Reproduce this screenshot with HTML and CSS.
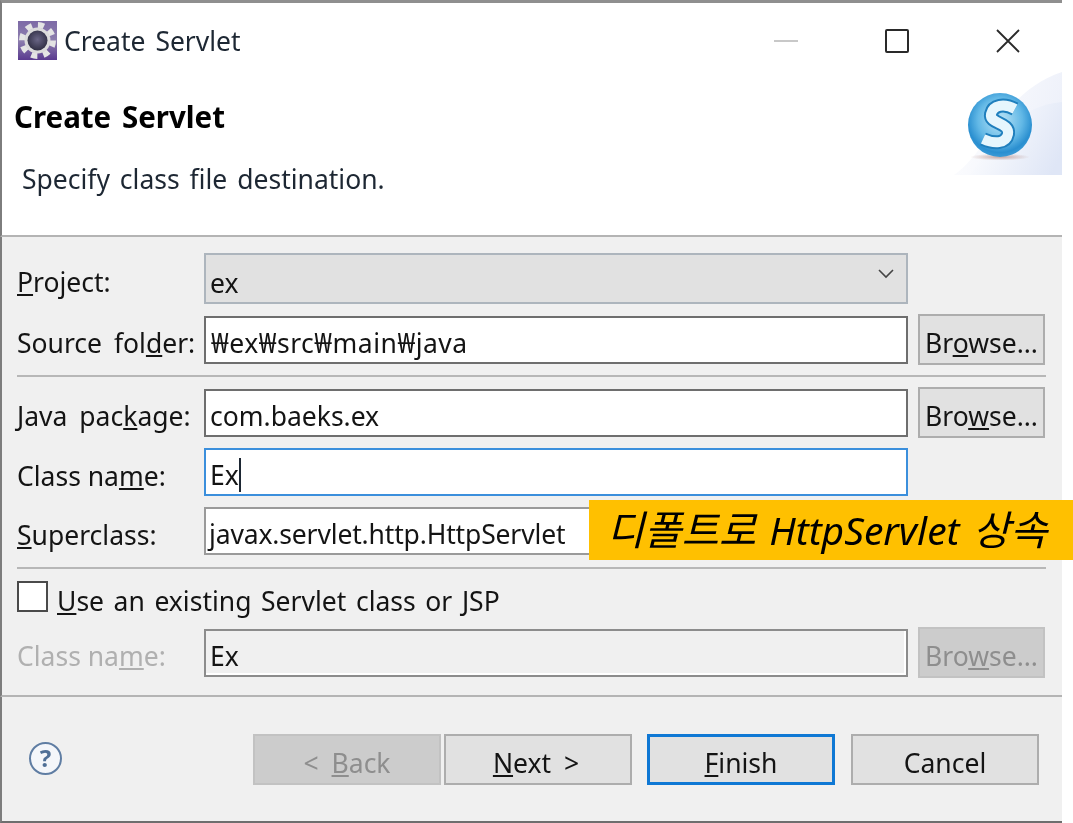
FILE: index.html
```html
<!DOCTYPE html>
<html lang="en">
<head>
<meta charset="utf-8">
<title>Create Servlet</title>
<link rel="stylesheet" href="styles.css">
</head>
<body>
<div class="dialog">
  <header class="titlebar">
    <svg class="app-icon" viewBox="0 0 39 39" width="39" height="39" aria-hidden="true">
      <defs>
        <linearGradient id="appBg" x1="0" y1="0" x2="0" y2="1">
          <stop offset="0" stop-color="#7d6aa6"/>
          <stop offset="0.5" stop-color="#8d7fae"/>
          <stop offset="1" stop-color="#5a3a8f"/>
        </linearGradient>
        <radialGradient id="appCore" cx="0.5" cy="0.45" r="0.6">
          <stop offset="0" stop-color="#6a6686"/>
          <stop offset="1" stop-color="#2b2a3e"/>
        </radialGradient>
      </defs>
      <rect width="39" height="39" fill="url(#appBg)"/>
      <circle cx="19.5" cy="19.5" r="15.5" fill="none" stroke="#e4e4e4" stroke-width="6" stroke-dasharray="6.1 6.07"/>
      <circle cx="19.5" cy="19.5" r="13" fill="#dcdcdc"/>
      <circle cx="19.5" cy="19.5" r="10" fill="url(#appCore)"/>
    </svg>
    <span class="window-title">Create Servlet</span>
    <div class="window-controls">
      <svg class="ctl ctl-min" viewBox="0 0 24 24" width="24" height="24" aria-hidden="true"><path d="M0 12H24" stroke="#c8c8c8" stroke-width="2"/></svg>
      <svg class="ctl ctl-max" viewBox="0 0 24 24" width="24" height="24" aria-hidden="true"><rect x="1" y="1" width="22" height="22" rx="1" fill="none" stroke="#2a2a2a" stroke-width="2"/></svg>
      <svg class="ctl ctl-close" viewBox="0 0 24 24" width="24" height="24" aria-hidden="true"><path d="M1 1L23 23M23 1L1 23" stroke="#2a2a2a" stroke-width="1.8"/></svg>
    </div>
  </header>

  <section class="wizard-head">
    <div class="wizard-text">
      <h1 class="wizard-title">Create Servlet</h1>
      <p class="wizard-desc">Specify class file destination.</p>
    </div>
    <svg class="wizard-logo" viewBox="0 0 112 103" width="112" height="103" aria-hidden="true">
      <defs>
        <linearGradient id="wash" x1="0" y1="0.3" x2="1" y2="0.7">
          <stop offset="0" stop-color="#ffffff"/>
          <stop offset="1" stop-color="#dfe6f6"/>
        </linearGradient>
        <linearGradient id="wash2" x1="0" y1="0" x2="1" y2="0.3">
          <stop offset="0" stop-color="#ffffff"/>
          <stop offset="1" stop-color="#eef1fa"/>
        </linearGradient>
        <radialGradient id="ball" cx="0.5" cy="0.42" r="0.58">
          <stop offset="0" stop-color="#bfe6f7"/>
          <stop offset="0.6" stop-color="#62b8e6"/>
          <stop offset="0.88" stop-color="#2a8fd0"/>
          <stop offset="1" stop-color="#3a9ad6"/>
        </radialGradient>
        <radialGradient id="shade" cx="0.5" cy="0.5" r="0.5">
          <stop offset="0" stop-color="#a8756a" stop-opacity="0.6"/>
          <stop offset="1" stop-color="#a8756a" stop-opacity="0"/>
        </radialGradient>
      </defs>
      <path d="M4 103C40 78 52 20 112 0V103Z" fill="url(#wash2)"/>
      <path d="M20 103C50 60 70 34 112 30V103Z" fill="url(#wash)"/>
      <ellipse cx="50" cy="85" rx="30" ry="3.5" fill="url(#shade)"/>
      <circle cx="50" cy="53" r="32" fill="url(#ball)"/>
      <path d="M65 37C54 31 43 33 41 42C39 52 60 50 58 62C56 72 44 72 33 67" fill="none" stroke="#1f7fbd" stroke-width="14"/>
      <path d="M65 37C54 31 43 33 41 42C39 52 60 50 58 62C56 72 44 72 33 67" fill="none" stroke="#e6f6fd" stroke-width="10"/>
    </svg>
  </section>

  <main class="wizard-body">
    <div class="row row-project">
      <label class="label"><u>P</u>roject:</label>
      <div class="select"><span>ex</span>
        <svg class="chevron" viewBox="0 0 16 10" width="16" height="10" aria-hidden="true"><path d="M1 1L8 8L15 1" fill="none" stroke="#444" stroke-width="1.6"/></svg>
      </div>
    </div>
    <div class="row">
      <label class="label">Source fol<u>d</u>er:</label>
      <div class="field field-path">₩ex₩src₩main₩java</div>
      <button class="btn btn-side">Br<u>o</u>wse...</button>
    </div>
    <hr class="sep">
    <div class="row">
      <label class="label">Java pac<u>k</u>age:</label>
      <div class="field">com.baeks.ex</div>
      <button class="btn btn-side">Bro<u>w</u>se...</button>
    </div>
    <div class="row row-tight">
      <label class="label label-tight">Class na<u>m</u>e:</label>
      <div class="field field-focus"><span class="caret-text">Ex</span></div>
    </div>
    <div class="row row-tight row-super">
      <label class="label"><u>S</u>uperclass:</label>
      <div class="field field-super">javax.servlet.http.HttpServlet</div>
    </div>
    <hr class="sep sep-2">
    <div class="check-row">
      <span class="checkbox"></span>
      <span class="check-label"><u>U</u>se an existing Servlet class or JSP</span>
    </div>
    <div class="row row-disabled">
      <label class="label label-tight label-disabled">Class na<u>m</u>e:</label>
      <div class="field field-disabled">Ex</div>
      <button class="btn btn-side btn-disabled">Bro<u>w</u>se...</button>
    </div>
  </main>

  <footer class="wizard-foot">
    <div class="help">?</div>
    <div class="foot-buttons">
      <button class="btn btn-foot btn-disabled">&lt; <u>B</u>ack</button>
      <button class="btn btn-foot btn-next"><u>N</u>ext &gt;</button>
      <button class="btn btn-foot btn-default"><u>F</u>inish</button>
      <button class="btn btn-foot">Cancel</button>
    </div>
  </footer>

  <div class="callout"><span class="ko">디폴트로</span> HttpServlet <span class="ko">상속</span></div>
</div>
</body>
</html>
```
FILE: styles.css
```css
* { box-sizing: border-box; }
html, body { margin: 0; padding: 0; background: #fff; }
body { width: 1073px; height: 823px; overflow: hidden; font-family: "Noto Sans", "Noto Sans CJK KR", sans-serif; color: #141414; }

.dialog {
  position: relative;
  width: 1073px;
  height: 823px;
  background: #fff;
  font-size: 26.5px;
  line-height: 36px;
  word-spacing: 3px;
  filter: blur(0.35px);
}

.titlebar {
  display: flex;
  align-items: center;
  width: 1062px;
  height: 72px;
  padding: 6px 42px 0 18px;
  background: #fff;
  border-top: 3px solid #8f8f8f;
  border-left: 2px solid #7d7d7d;
}
.app-icon { margin-left: -2px; flex: none; }
.window-title { margin-left: 7px; color: #1d2733; }
.window-controls { display: flex; align-items: center; gap: 87px; margin-left: auto; }
.ctl { display: block; flex: none; }

.wizard-head {
  display: flex;
  justify-content: space-between;
  width: 1062px;
  height: 165px;
  padding-left: 12px;
  background: #fff;
  border-left: 2px solid #7d7d7d;
  border-bottom: 2px solid #b4b4b4;
}
.wizard-title { margin: 26px 0 0; font-size: 29.5px; line-height: 38px; font-weight: 700; color: #000; }
.wizard-desc { margin: 25px 0 0 8px; line-height: 36px; color: #1d2733; }
.wizard-logo { flex: none; display: block; }

.wizard-body {
  width: 1062px;
  height: 460px;
  padding: 16px 0 0 15px;
  background: #f0f0f0;
  border-left: 2px solid #7d7d7d;
  border-bottom: 2px solid #b4b4b4;
}
.row {
  display: grid;
  grid-template-columns: 187px 704px 137px;
  align-items: center;
  height: 51px;
  margin-top: 10px;
}
.row-project { margin-top: 0; }
.row-tight { height: 48px; }
.row-super { margin-top: 11px; }
.row-disabled { margin-top: 15px; }
.label { white-space: nowrap; padding-top: 7px; word-spacing: 5px; }
.label-tight { word-spacing: 0; }
.label-disabled { color: #b0b0b0; }
.select {
  display: flex;
  align-items: center;
  justify-content: space-between;
  height: 51px;
  padding: 9px 12px 0 4px;
  background: #e1e1e1;
  border: 2px solid #adb5bd;
}
.chevron { display: block; margin-top: -18px; }
.field {
  height: 48px;
  padding: 7px 0 0 4px;
  background: #fff;
  border: 2px solid #6e6e6e;
  white-space: nowrap;
  overflow: hidden;
}
.field-path { padding-left: 5px; letter-spacing: 0.5px; }
.field-focus { border-color: #3b8fdc; }
.field-super { border-color: #9a9a9a; padding-left: 3px; letter-spacing: -0.15px; }
.field-disabled { background: #f0f0f0; border-color: #8c8c8c; box-shadow: inset -2px -2px 0 #fff; }
.caret-text { border-right: 2px solid #1d2733; display: inline-block; line-height: 34px; }
.sep { height: 2px; margin: 10px 0 0; border: 0; background: #b7b7b7; width: 1029px; }
.sep-2 { margin-top: 12px; }

.check-row { display: flex; align-items: center; height: 31px; margin-top: 12px; }
.checkbox { flex: none; width: 31px; height: 31px; background: #fff; border: 2px solid #4a4a4a; }
.check-label { margin-left: 9px; padding-top: 8px; word-spacing: 2.7px; }

.btn {
  height: 51px;
  margin: 0;
  padding: 7px 0 0;
  font: inherit;
  word-spacing: inherit;
  color: #141414;
  background: #e1e1e1;
  border: 2px solid #adadad;
}
.btn-side { width: 127px; margin-left: 10px; }
.btn-disabled { background: #cccccc; border-color: #c2c2c2; color: #8e8e8e; }

.wizard-foot {
  display: flex;
  align-items: flex-start;
  width: 1062px;
  height: 126px;
  padding: 0 0 0 27px;
  background: #f0f0f0;
  border-left: 2px solid #7d7d7d;
  border-bottom: 2px solid #6e6e6e;
}
.help {
  flex: none;
  width: 33px;
  height: 33px;
  margin-top: 45px;
  border: 2px solid #5f7da3;
  border-radius: 50%;
  background: #f4f6fa;
  color: #4f6f96;
  font-size: 24px;
  font-weight: 700;
  line-height: 28px;
  text-align: center;
}
.foot-buttons { display: flex; margin: 37px 0 0 191px; }
.btn-foot { width: 188px; word-spacing: 6px; }
.btn-next { margin-left: 3px; padding-right: 4px; }
.btn-default { margin-left: 15px; border: 3px solid #0f78d4; }
.btn-foot:last-child { margin-left: 16px; }

.callout {
  position: absolute;
  left: 589px;
  top: 500px;
  width: 484px;
  height: 60px;
  padding-left: 18px;
  background: #ffc000;
  color: #000;
  font-style: italic;
  font-size: 39px;
  line-height: 60px;
  word-spacing: 3px;
  white-space: nowrap;
}
.ko { font-size: 40.5px; }
```
